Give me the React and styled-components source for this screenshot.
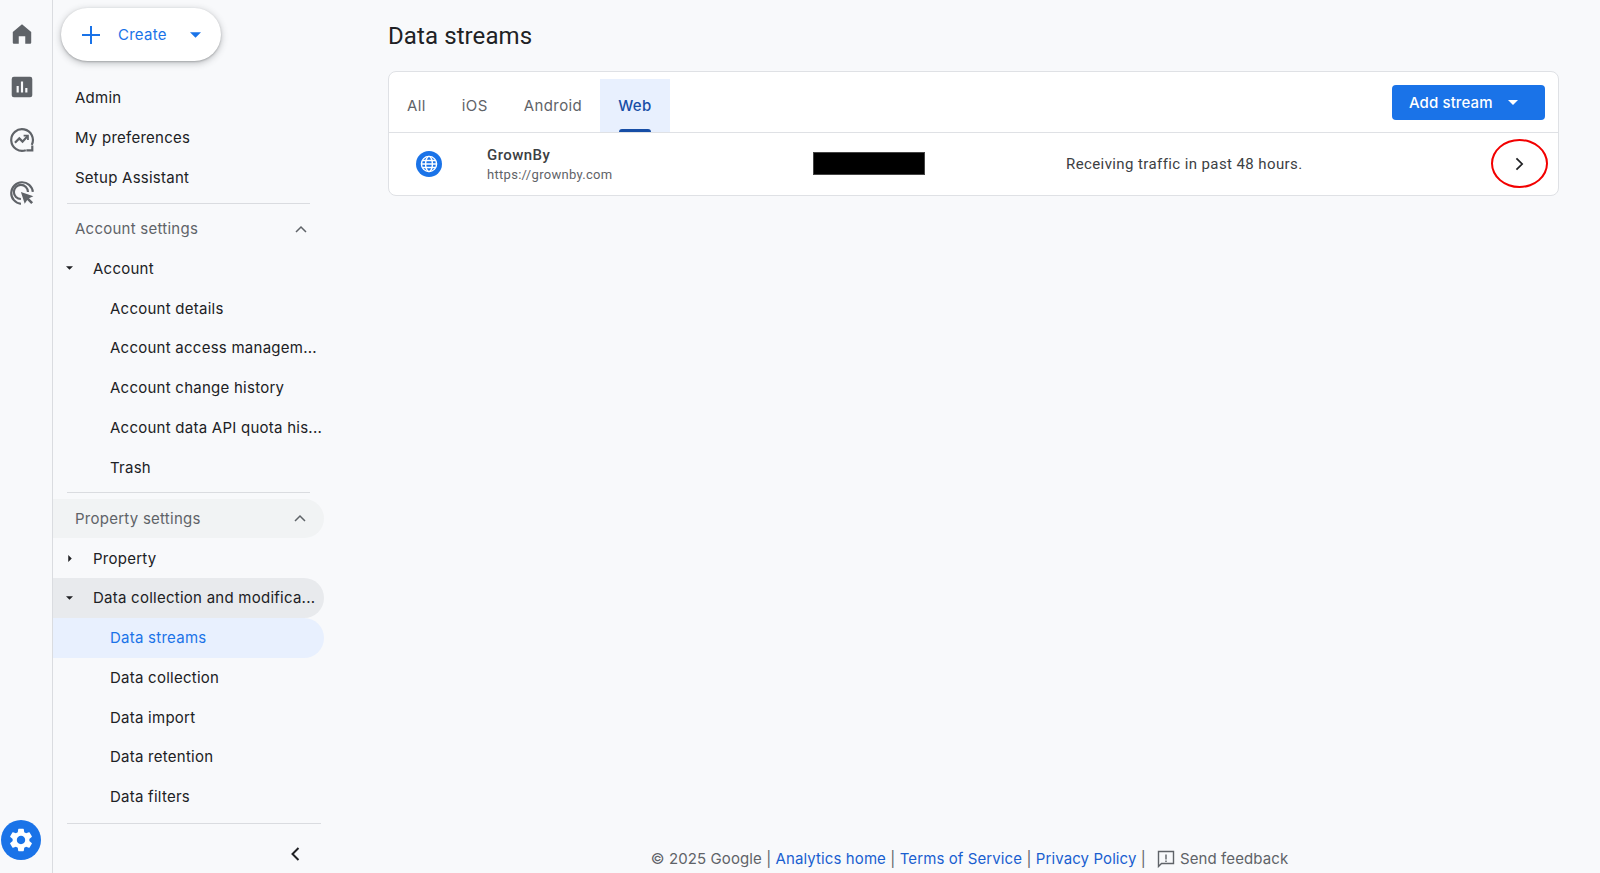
import React from 'react';
import styled, { createGlobalStyle } from 'styled-components';

const GlobalStyle = createGlobalStyle`
	html, body {
		margin: 0;
		height: 100%;
		background: #f8f9fb;
		font-family: Inter, Roboto, 'Liberation Sans', sans-serif;
		color: #202124;
	}
	* {
		box-sizing: border-box;
	}
`;

const Page = styled.div`
	display: flex;
	height: 873px;
	overflow: hidden;
`;

const Rail = styled.nav`
	width: 53px;
	flex-shrink: 0;
	display: flex;
	flex-direction: column;
	align-items: center;
	border-right: 1px solid #dadce0;
	padding: 21px 10px 13px 0;
`;

const RailIcon = styled.div`
	width: 26px;
	height: 26px;
	margin-bottom: 27px;
	margin-left: 2px;
	color: #5f6368;
	svg {
		display: block;
		width: 100%;
		height: 100%;
	}
`;

const SettingsButton = styled.div`
	margin-top: auto;
	width: 40px;
	height: 40px;
	border-radius: 50%;
	background: #1a73e8;
	color: #fff;
	display: flex;
	align-items: center;
	justify-content: center;
	svg {
		width: 28px;
		height: 28px;
	}
`;

const Sidebar = styled.aside`
	width: 272px;
	flex-shrink: 0;
	display: flex;
	flex-direction: column;
	padding-top: 8px;
`;

const CreateButton = styled.div`
	width: 160px;
	height: 53px;
	margin: 0 0 17px 8px;
	border-radius: 27px;
	background: #fff;
	box-shadow: 0 2px 6px 1px rgba(60, 64, 67, 0.25), 0 1px 2px rgba(60, 64, 67, 0.3);
	color: #1a73e8;
	display: flex;
	align-items: center;
	padding-left: 21px;
	font-size: 15px;
	letter-spacing: 0.25px;
	svg {
		flex-shrink: 0;
	}
`;

const CreateLabel = styled.span`
	margin: 0 23px 0 18px;
`;

const Row = styled.div`
	height: 39.75px;
	flex-shrink: 0;
	display: flex;
	align-items: center;
	width: ${(p) => (p.$pill ? '271px' : '100%')};
	padding-left: ${(p) => (p.$level === 2 ? 57 : p.$level === 1 ? 16 : 22)}px;
	border-radius: 0 20px 20px 0;
	font-size: 15px;
	letter-spacing: 0.25px;
	white-space: nowrap;
	color: ${(p) => (p.$active ? '#1a73e8' : p.$muted ? '#5f6368' : '#202124')};
	background: ${(p) => (p.$active ? '#e8f0fe' : p.$pill || 'transparent')};
`;

const Caret = styled.span`
	width: 7px;
	height: 7px;
	margin-right: 20px;
	margin-left: -3px;
	display: flex;
	align-items: center;
	justify-content: center;
	flex-shrink: 0;
	svg {
		display: block;
	}
`;

const Chevron = styled.svg`
	margin-left: auto;
	margin-right: 18px;
`;

const Divider = styled.hr`
	border: 0;
	height: 1px;
	background: #dadce0;
	margin: ${(p) => p.$gap || '5.25px 0 5.25px 14px'};
	width: ${(p) => p.$width || 243}px;
	flex-shrink: 0;
`;

const CollapseButton = styled.div`
	display: flex;
	justify-content: flex-end;
	padding: 23px 25px 0 0;
	color: #202124;
`;

const Main = styled.main`
	flex: 1;
	min-width: 0;
	display: flex;
	flex-direction: column;
	padding: 0 41px 0 63px;
`;

const Title = styled.h1`
	margin: 0;
	padding-top: 20px;
	height: 71px;
	font-family: Roboto, sans-serif;
	font-size: 24px;
	line-height: 32px;
	font-weight: 400;
	letter-spacing: 0.1px;
	color: #202124;
`;

const Card = styled.section`
	position: relative;
	background: #fff;
	border: 1px solid #dfe1e5;
	border-radius: 8px;
`;

const CardHeader = styled.div`
	height: 61px;
	display: flex;
	align-items: flex-end;
	justify-content: space-between;
	border-bottom: 1px solid #dfe1e5;
	padding-right: 13px;
`;

const Tabs = styled.div`
	display: flex;
	height: 53px;
`;

const Tab = styled.div`
	position: relative;
	padding: 0 18px;
	display: flex;
	align-items: center;
	font-size: 15px;
	letter-spacing: 0.4px;
	color: ${(p) => (p.$active ? '#174ea6' : '#5f6368')};
	font-weight: ${(p) => (p.$active ? 500 : 400)};
	background: ${(p) => (p.$active ? '#e8f0fe' : 'transparent')};
	&::after {
		content: '';
		display: ${(p) => (p.$active ? 'block' : 'none')};
		position: absolute;
		left: 19px;
		right: 19px;
		bottom: 0;
		height: 3px;
		border-radius: 3px 3px 0 0;
		background: #174ea6;
	}
`;

const AddStream = styled.div`
	align-self: center;
	width: 153px;
	height: 35px;
	border-radius: 4px;
	background: #1a73e8;
	color: #fff;
	display: flex;
	align-items: center;
	padding-left: 17px;
	font-size: 15px;
	font-weight: 500;
	letter-spacing: 0.1px;
	svg {
		margin-left: 15px;
	}
`;

const StreamRow = styled.div`
	height: 62px;
	display: grid;
	grid-template-columns: 98px 326px 253px 1fr auto;
	align-items: center;
	padding-right: 34px;
	font-family: Roboto, sans-serif;
`;

const GlobeCell = styled.div`
	display: flex;
	justify-content: center;
	padding-right: 18px;
	color: #1a73e8;
`;

const StreamName = styled.div`
	font-size: 15px;
	line-height: 20px;
	letter-spacing: 0.45px;
	font-weight: 500;
	color: #3c4043;
`;

const StreamUrl = styled.div`
	font-size: 13px;
	line-height: 19px;
	letter-spacing: 0.3px;
	color: #5f6368;
`;

const Redacted = styled.div`
	width: 112px;
	height: 23px;
	margin-bottom: 2px;
	background: #000;
	border: 1px solid #444;
`;

const StatusText = styled.div`
	font-size: 15px;
	letter-spacing: 0.4px;
	color: #3c4043;
`;

const RedCircle = styled.div`
	position: absolute;
	right: 10px;
	top: 67px;
	width: 57px;
	height: 49px;
	border: 2px solid #f20000;
	border-radius: 50%;
`;

const Footer = styled.footer`
	margin-top: auto;
	height: 23px;
	display: flex;
	align-items: flex-start;
	justify-content: center;
	padding-right: 8px;
	font-size: 15px;
	line-height: 18px;
	letter-spacing: 0.1px;
	color: #5f6368;
	white-space: pre;
`;

const FooterLink = styled.a`
	color: #1a5fd0;
`;

const Feedback = styled.span`
	display: inline-flex;
	align-items: center;
	margin-left: 11px;
	svg {
		margin-right: 5px;
	}
`;

const CaretDown = ({ color = 'currentColor', w = 7, h = 4 }) => (
	<svg width={w} height={h} viewBox="0 0 10 5"><path d="M0 0l5 5 5-5z" fill={color} /></svg>
);

const CaretRight = () => (
	<svg width="4" height="7" viewBox="0 0 5 10"><path d="M0 0l5 5-5 5z" fill="#202124" /></svg>
);

const ChevronUp = () => (
	<Chevron width="12" height="8" viewBox="0 0 12 8" fill="none" stroke="#5f6368" strokeWidth="1.5"><path d="M1 7l5-5 5 5" /></Chevron>
);

const accountItems = ['Account details', 'Account access managem...', 'Account change history', 'Account data API quota his...', 'Trash'];
const dataItems = ['Data collection', 'Data import', 'Data retention', 'Data filters'];

const App = () => {
	return (
		<Page>
			<GlobalStyle />
			<Rail>
				<RailIcon>
					<svg viewBox="0 0 24 24" fill="currentColor"><path d="M4.500 21a1 1 0 0 1-1-1V10.200L12 3l8.500 7.200V20a1 1 0 0 1-1 1h-4.500v-7H9v7z" /></svg>
				</RailIcon>
				<RailIcon>
					<svg viewBox="0 0 24 24" fill="currentColor"><path d="M19.500 2.500h-15a2 2 0 0 0-2 2v15a2 2 0 0 0 2 2h15a2 2 0 0 0 2-2v-15a2 2 0 0 0-2-2zM9 17H7v-6h2zm4 0h-2V7h2zm4 0h-2v-4h2z" /></svg>
				</RailIcon>
				<RailIcon>
					<svg viewBox="0 0 24 24" fill="none" stroke="currentColor" strokeWidth="2"><path d="M21 16.500A10 10 0 1 0 15.500 21.400" /><path d="M16 21.500h5.500V17" /><path d="M5.500 14.500l4-4 3 3 4.500-5" /><path d="M13.500 8h4v4" strokeWidth="1.6" /></svg>
				</RailIcon>
				<RailIcon>
					<svg viewBox="0 0 24 24" fill="none" stroke="currentColor" strokeWidth="2"><path d="M11 22A10 10 0 1 1 22 11" /><path d="M11 17.500A6.500 6.500 0 1 1 17.500 11" /><path d="M11 11l11.500 4-4 1.800 3.700 3.700-1.700 1.700-3.700-3.700L14.500 22z" fill="currentColor" stroke="none" /></svg>
				</RailIcon>
				<SettingsButton>
					<svg viewBox="0 0 24 24" fill="currentColor"><path d="M19.14 12.94c.04-.3.06-.61.06-.94 0-.32-.02-.64-.07-.94l2.03-1.58c.18-.14.23-.41.12-.61l-1.92-3.32c-.12-.22-.37-.29-.59-.22l-2.39.96c-.5-.38-1.03-.7-1.62-.94l-.36-2.54c-.04-.24-.24-.41-.48-.41h-3.84c-.24 0-.43.17-.47.41l-.36 2.54c-.59.24-1.13.57-1.62.94l-2.39-.96c-.22-.08-.47 0-.59.22L2.74 8.87c-.12.21-.08.47.12.61l2.03 1.58c-.05.3-.09.63-.09.94s.02.64.07.94l-2.03 1.58c-.18.14-.23.41-.12.61l1.92 3.32c.12.22.37.29.59.22l2.39-.96c.5.38 1.03.7 1.62.94l.36 2.54c.05.24.24.41.48.41h3.84c.24 0 .44-.17.47-.41l.36-2.54c.59-.24 1.13-.56 1.62-.94l2.39.96c.22.08.47 0 .59-.22l1.92-3.32c.12-.22.07-.47-.12-.61l-2.01-1.58zM12 15.600c-1.98 0-3.600-1.620-3.600-3.600s1.620-3.600 3.600-3.600 3.600 1.620 3.600 3.600-1.620 3.600-3.600 3.600z" /></svg>
				</SettingsButton>
			</Rail>

			<Sidebar>
				<CreateButton>
					<svg width="18" height="18" viewBox="0 0 18 18" stroke="currentColor" strokeWidth="2"><path d="M9 0v18M0 9h18" /></svg>
					<CreateLabel>Create</CreateLabel>
					<CaretDown w={11} h={6} />
				</CreateButton>
				<Row>Admin</Row>
				<Row>My preferences</Row>
				<Row>Setup Assistant</Row>
				<Divider />
				<Row $muted>Account settings<ChevronUp /></Row>
				<Row $level={1}><Caret><CaretDown /></Caret>Account</Row>
				{accountItems.map((item) => (
					<Row key={item} $level={2}>{item}</Row>
				))}
				<Divider />
				<Row $muted $pill="#f1f3f4">Property settings<ChevronUp /></Row>
				<Row $level={1}><Caret><CaretRight /></Caret>Property</Row>
				<Row $level={1} $pill="#e8eaed"><Caret><CaretDown /></Caret>Data collection and modifica...</Row>
				<Row $level={2} $active $pill="#e8f0fe">Data streams</Row>
				{dataItems.map((item) => (
					<Row key={item} $level={2}>{item}</Row>
				))}
				<Divider $width={254} $gap="6px 0 0 14px" />
				<CollapseButton>
					<svg width="10" height="14" viewBox="0 0 10 14" fill="none" stroke="currentColor" strokeWidth="2"><path d="M8.500 1L2.500 7l6 6" /></svg>
				</CollapseButton>
			</Sidebar>

			<Main>
				<Title>Data streams</Title>
				<Card>
					<CardHeader>
						<Tabs>
							<Tab>All</Tab>
							<Tab>iOS</Tab>
							<Tab>Android</Tab>
							<Tab $active>Web</Tab>
						</Tabs>
						<AddStream>Add stream<CaretDown w={10} h={5} /></AddStream>
					</CardHeader>
					<StreamRow>
						<GlobeCell>
							<svg width="26" height="26" viewBox="0 0 26 26" fill="none">
								<circle cx="13" cy="13" r="13" fill="currentColor" />
								<g stroke="#fff" strokeWidth="1.4">
									<circle cx="13" cy="13" r="7.600" />
									<ellipse cx="13" cy="13" rx="3.400" ry="7.600" />
									<path d="M5.400 13h15.200M6.400 9.500h13.200M6.400 16.500h13.200" />
								</g>
							</svg>
						</GlobeCell>
						<div>
							<StreamName>GrownBy</StreamName>
							<StreamUrl>https://grownby.com</StreamUrl>
						</div>
						<Redacted />
						<StatusText>Receiving traffic in past 48 hours.</StatusText>
						<svg width="9" height="14" viewBox="0 0 10 16" fill="none" stroke="#202124" strokeWidth="2"><path d="M1.500 1.500L8 8l-6.500 6.500" /></svg>
					</StreamRow>
					<RedCircle />
				</Card>
				<Footer>
					© 2025 Google | <FooterLink>Analytics home</FooterLink> | <FooterLink>Terms of Service</FooterLink> | <FooterLink>Privacy Policy</FooterLink> |
					<Feedback>
						<svg width="18" height="18" viewBox="0 0 18 18" fill="none" stroke="#5f6368" strokeWidth="1.4"><path d="M1.500 1.500h15v12H4.500l-3 3z" /><path d="M9 4.500v5M9 10.500v1.500" /></svg>
						Send feedback
					</Feedback>
				</Footer>
			</Main>
		</Page>
	);
};

export default App;
